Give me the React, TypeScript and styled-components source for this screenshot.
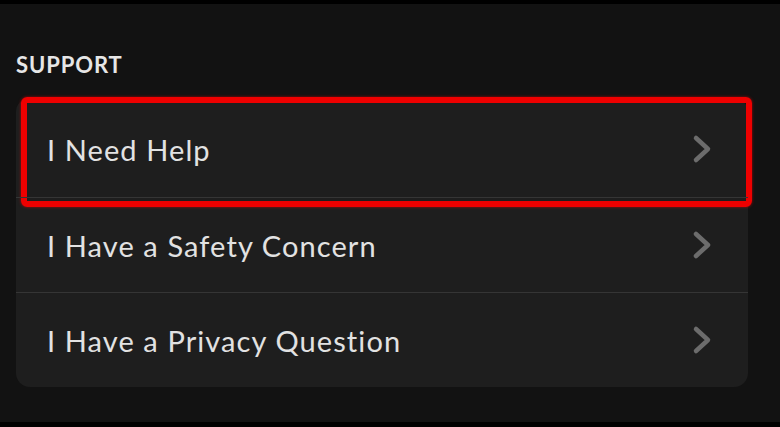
import React from "react";
import styled, { createGlobalStyle } from "styled-components";

const GlobalStyle = createGlobalStyle`
  html, body {
    margin: 0;
    padding: 0;
    background: #000;
  }
  * {
    box-sizing: border-box;
  }
`;

const Screen = styled.div`
  width: 780px;
  height: 427px;
  background: #121212;
  border-top: 4px solid #000;
  border-bottom: 5px solid #000;
  padding: 0 32px 0 16px;
  font-family: Lato, "Open Sans", sans-serif;
  overflow: hidden;
`;

const SectionTitle = styled.h2`
  margin: 0;
  padding-top: 47px;
  height: 94px;
  font-size: 22px;
  font-weight: 700;
  letter-spacing: 0.9px;
  color: #e6e6e6;
`;

const Card = styled.div`
  display: flex;
  flex-direction: column;
  background: #1e1e1e;
  border-radius: 14px;
`;

const Row = styled.div<{ $first?: boolean; $highlighted?: boolean }>`
  position: relative;
  display: flex;
  align-items: center;
  justify-content: space-between;
  height: ${(p) => (p.$first ? "99px" : "95px")};
  padding: ${(p) => (p.$first ? "2px" : "0")} 36px 0 31px;
  border-top: 1px solid ${(p) => (p.$first ? "transparent" : "#353535")};

  ${(p) =>
    p.$highlighted &&
    `
    &::after {
      content: "";
      position: absolute;
      left: 5px;
      right: -4px;
      top: -2px;
      bottom: -10px;
      border: 6px solid #ee0000;
      border-radius: 6px;
      box-shadow: 0 0 3px rgba(255, 0, 0, 0.6);
    }
  `}
`;

const Label = styled.span`
  font-size: 29px;
  font-weight: 400;
  color: #e2e2e2;
  letter-spacing: 1.1px;
`;

const Chevron = () => (
  <svg width="20" height="30" viewBox="0 0 20 30">
    <polyline
      points="4,4 16,15 4,26"
      fill="none"
      stroke="#6c6c6c"
      strokeWidth="4.5"
      strokeLinecap="round"
      strokeLinejoin="round"
    />
  </svg>
);

const items = ["I Need Help", "I Have a Safety Concern", "I Have a Privacy Question"];

const App = () => {
  return (
    <>
      <GlobalStyle />
      <Screen>
        <SectionTitle>SUPPORT</SectionTitle>
        <Card>
          {items.map((item, i) => (
            <Row key={item} $first={i === 0} $highlighted={i === 0}>
              <Label>{item}</Label>
              <Chevron />
            </Row>
          ))}
        </Card>
      </Screen>
    </>
  );
};

export default App;
